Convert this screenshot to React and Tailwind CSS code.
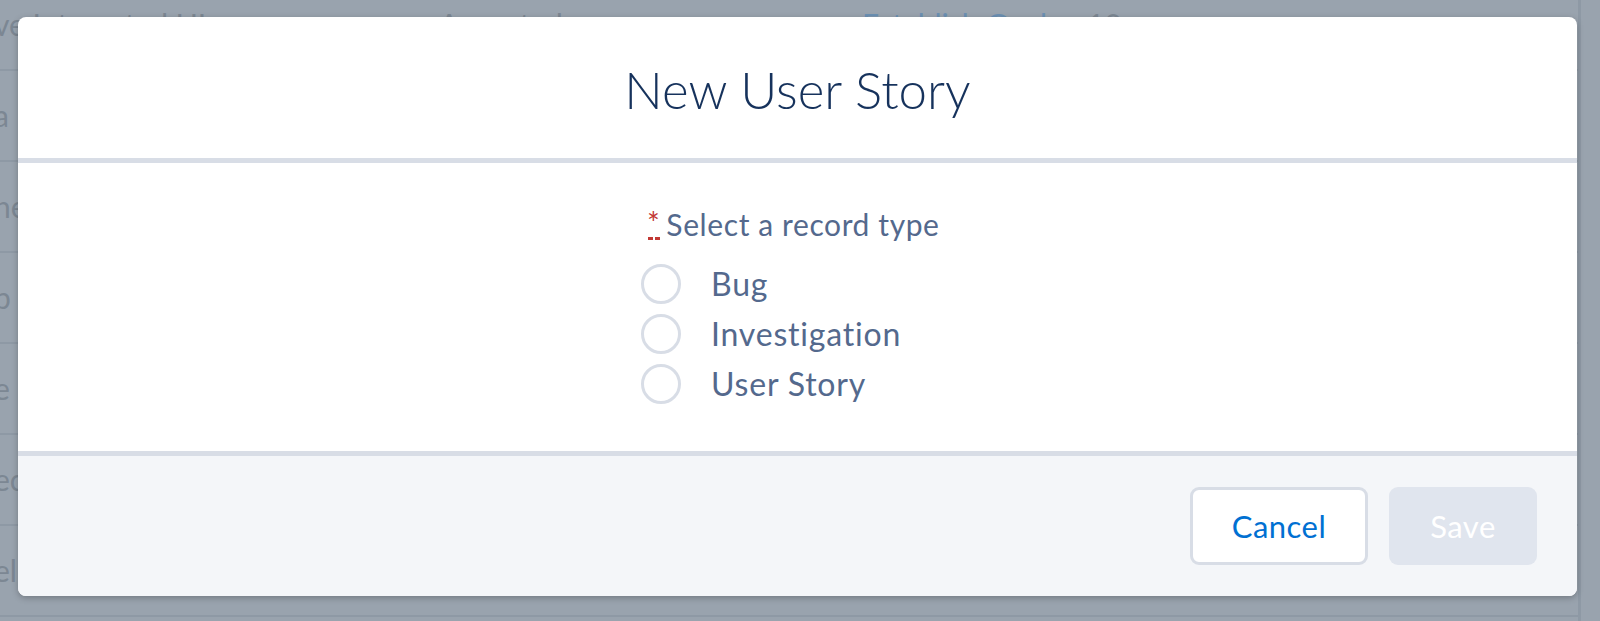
import React from 'react';

// table rows sitting behind the backdrop
const rows = [
  { a: 've Integrated UI', b: 'Accepted', c: 'Establish Goal', d: '10' },
  { a: 'a' },
  { a: 'he' },
  { a: 'p' },
  { a: 'e' },
  { a: 'ec' },
  { a: 'el' },
];

function RadioOption({ label }) {
  return (
    <label className="flex items-center h-[50px] cursor-pointer">
      <span className="w-[40px] h-[40px] rounded-full border-[3px] border-[#d8dde6] bg-white shrink-0" />
      <span className="ml-[30px] text-[32px] tracking-[0.8px] text-[#54698d] leading-none">{label}</span>
    </label>
  );
}

export default function App() {
  return (
    <div
      className="relative w-[1600px] h-[621px] overflow-hidden bg-[#99a3ae]"
      style={{ fontFamily: 'Lato, "Open Sans", sans-serif' }}
    >
      {/* page behind the backdrop */}
      <div className="flex h-full">
        <div className="w-[1578px] -mt-[20px]">
          {rows.map((r, i) => (
            <div
              key={i}
              className="flex items-center h-[91px] border-b-2 border-[#8e99a5] text-[30px] text-[#7c8793]"
            >
              <div className="w-[445px] -ml-[6px] whitespace-nowrap">{r.a}</div>
              <div className="w-[423px] whitespace-nowrap">{r.b}</div>
              <div className="w-[225px] whitespace-nowrap text-[#6b90b3]">{r.c}</div>
              <div className="w-[60px] whitespace-nowrap">{r.d}</div>
              {i === 0 && (
                <div className="ml-[389px] mt-[30px] w-[36px] h-[38px] rounded-[7px] border-2 border-[#8e99a5]" />
              )}
            </div>
          ))}
        </div>
        <div className="flex-1 border-l-[3px] border-[#8e99a5]" />
      </div>

      {/* modal */}
      <div className="absolute left-[18px] top-[17px] w-[1559px] h-[579px] rounded-[8px] bg-white shadow-[0_2px_6px_rgba(0,0,0,0.25)] flex flex-col overflow-hidden">
        <header className="h-[146px] shrink-0 border-b-[5px] border-[#d8dde6] flex items-center justify-center">
          <h2 className="text-[51px] font-light text-[#16325c] leading-none mb-[-3px]">New User Story</h2>
        </header>

        <div className="h-[288px] shrink-0 pl-[623px] pt-[45px]">
          <fieldset>
            <legend className="flex items-start text-[30px] tracking-[0.6px] text-[#54698d] leading-[32px] mb-[19px]">
              <span className="inline-flex flex-col items-center ml-[6px] mr-[6px] text-[#c23934]">
                <span className="text-[30px] leading-[22px] mt-[3px]">*</span>
                <span className="flex gap-[2px] mt-[4px]">
                  <span className="w-[5px] h-[3px] bg-[#c23934]" />
                  <span className="w-[5px] h-[3px] bg-[#c23934]" />
                </span>
              </span>
              <span>Select a record type</span>
            </legend>
            <div className="flex flex-col">
              <RadioOption label="Bug" />
              <RadioOption label="Investigation" />
              <RadioOption label="User Story" />
            </div>
          </fieldset>
        </div>

        <footer className="flex-1 border-t-[5px] border-[#d8dde6] bg-[#f4f6f9] flex items-center justify-end pr-[40px] gap-[21px]">
          <button className="w-[178px] h-[78px] rounded-[9px] border-[3px] border-[#d8dde6] bg-white text-[31px] tracking-[0.5px] text-[#0070d2]">
            Cancel
          </button>
          <button className="w-[148px] h-[78px] rounded-[9px] bg-[#e0e5ee] text-[31px] tracking-[0.5px] text-white" disabled>
            Save
          </button>
        </footer>
      </div>
    </div>
  );
}
